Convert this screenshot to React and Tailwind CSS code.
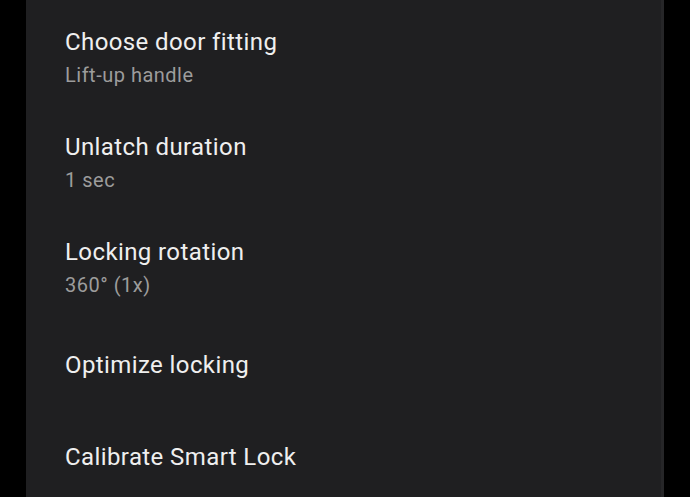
export default function App() {
  const font = { fontFamily: "Roboto, 'Noto Sans', sans-serif" };
  return (
    <div className="w-[690px] h-[497px] bg-black flex overflow-hidden" style={font}>
      <div className="ml-[26px] w-[638px] h-full bg-[#1f1f21] border-r-[3px] border-[#262628] pt-[6px] pl-[39px] flex flex-col overflow-hidden">
        {[
          ["Choose door fitting", "Lift-up handle"],
          ["Unlatch duration", "1 sec"],
          ["Locking rotation", "360° (1x)"],
        ].map(([t, s]) => (
          <div key={t} className="shrink-0 pt-[20px] pb-[19px] flex flex-col">
            <div className="text-[24px] leading-[33px] tracking-[0.4px] text-[#efefef]">{t}</div>
            <div className="text-[20px] leading-[33px] tracking-[0.5px] text-[#9c9c9c]">{s}</div>
          </div>
        ))}
        <div className="shrink-0 h-[88px] flex items-center text-[24px] leading-[33px] tracking-[0.4px] text-[#efefef]">Optimize locking</div>
        <div className="shrink-0 h-[96px] flex items-center text-[24px] leading-[33px] tracking-[0.4px] text-[#efefef]">Calibrate Smart Lock</div>
      </div>
    </div>
  );
}
